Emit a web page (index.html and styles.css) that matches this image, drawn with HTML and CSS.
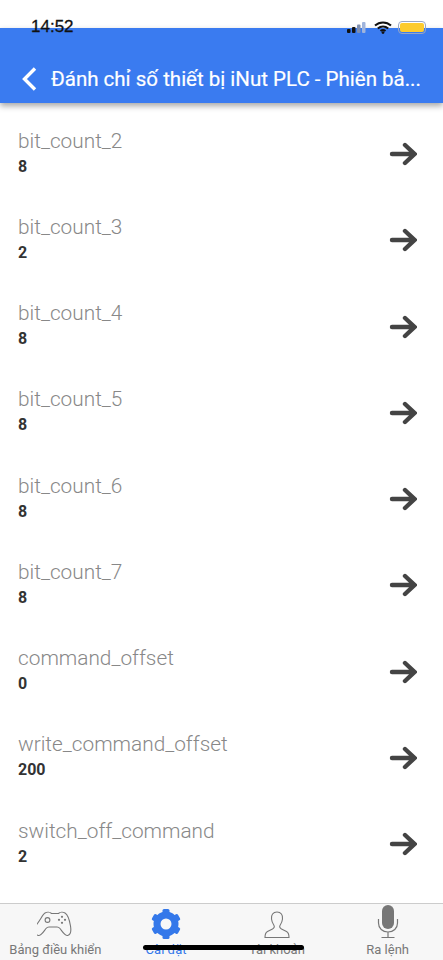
FILE: index.html
```html
<!DOCTYPE html>
<html lang="vi">
<head>
  <meta charset="UTF-8">
  <title>Đánh chỉ số thiết bị</title>
  <link rel="stylesheet" href="styles.css">
</head>
<body>
  <header class="topbar">
    <svg class="back" width="18" height="26" viewBox="0 0 18 26">
      <path d="M15 2.500 4.500 13 15 23.500" fill="none" stroke="#fff" stroke-width="3.400"/>
    </svg>
    <h1 class="title">Đánh chỉ số thiết bị iNut PLC - Phiên bả...</h1>
  </header>

  <div class="status">
    <span class="time">14:52</span>
    <div class="status-icons">
      <svg width="22" height="12" viewBox="0 0 22 12">
        <rect x="1" y="8" width="3.500" height="4" rx="1" fill="#111"/>
        <rect x="6" y="6" width="3.500" height="6" rx="1" fill="#111"/>
        <rect x="11" y="3.500" width="3.500" height="8.500" rx="1" fill="#7f8fb0"/>
        <rect x="16" y="1" width="3.500" height="11" rx="1" fill="#9fb4dc"/>
      </svg>
      <svg width="18" height="13" viewBox="0 0 18 13">
        <path d="M1 4.600C5.600.4 12.400.4 17 4.600M3.800 7.400c3-2.700 7.400-2.700 10.400 0M6.500 10c1.500-1.200 3.500-1.200 5 0" fill="none" stroke="#111" stroke-width="2"/>
        <circle cx="9" cy="11.600" r="1.400" fill="#111"/>
      </svg>
      <div class="battery"><div class="battery-fill"></div></div>
    </div>
  </div>

  <main class="list">
    <div class="row">
      <div class="row-text"><div class="name">bit_count_2</div><div class="value">8</div></div>
      <svg class="arrow" width="28" height="24" viewBox="0 0 28 24"><path d="M3 12h22M16 3l9.500 9-9.500 9"/></svg>
    </div>
    <div class="row">
      <div class="row-text"><div class="name">bit_count_3</div><div class="value">2</div></div>
      <svg class="arrow" width="28" height="24" viewBox="0 0 28 24"><path d="M3 12h22M16 3l9.500 9-9.500 9"/></svg>
    </div>
    <div class="row">
      <div class="row-text"><div class="name">bit_count_4</div><div class="value">8</div></div>
      <svg class="arrow" width="28" height="24" viewBox="0 0 28 24"><path d="M3 12h22M16 3l9.500 9-9.500 9"/></svg>
    </div>
    <div class="row">
      <div class="row-text"><div class="name">bit_count_5</div><div class="value">8</div></div>
      <svg class="arrow" width="28" height="24" viewBox="0 0 28 24"><path d="M3 12h22M16 3l9.500 9-9.500 9"/></svg>
    </div>
    <div class="row">
      <div class="row-text"><div class="name">bit_count_6</div><div class="value">8</div></div>
      <svg class="arrow" width="28" height="24" viewBox="0 0 28 24"><path d="M3 12h22M16 3l9.500 9-9.500 9"/></svg>
    </div>
    <div class="row">
      <div class="row-text"><div class="name">bit_count_7</div><div class="value">8</div></div>
      <svg class="arrow" width="28" height="24" viewBox="0 0 28 24"><path d="M3 12h22M16 3l9.500 9-9.500 9"/></svg>
    </div>
    <div class="row">
      <div class="row-text"><div class="name">command_offset</div><div class="value">0</div></div>
      <svg class="arrow" width="28" height="24" viewBox="0 0 28 24"><path d="M3 12h22M16 3l9.500 9-9.500 9"/></svg>
    </div>
    <div class="row">
      <div class="row-text"><div class="name">write_command_offset</div><div class="value">200</div></div>
      <svg class="arrow" width="28" height="24" viewBox="0 0 28 24"><path d="M3 12h22M16 3l9.500 9-9.500 9"/></svg>
    </div>
    <div class="row">
      <div class="row-text"><div class="name">switch_off_command</div><div class="value">2</div></div>
      <svg class="arrow" width="28" height="24" viewBox="0 0 28 24"><path d="M3 12h22M16 3l9.500 9-9.500 9"/></svg>
    </div>
  </main>

  <nav class="tabs">
    <div class="tab">
      <svg class="pad" width="36" height="28" viewBox="0 0 36 28" fill="none" stroke="#777" stroke-width="1.100">
        <path d="M8 3c2-1.200 5-1 6.500.5h7C23 2 26 1.800 28 3c2.500 1.500 4.500 7 5.500 13 .8 5-.2 9-2.800 9.500-2.700.5-5-3.500-7.700-7-1-1.200-1.800-1.500-3-1.500h-8c-1.200 0-2 .3-3 1.500-2.700 3.500-5 7.500-7.700 7-2.600-.5-3.600-4.500-2.800-9.500C3.500 10 5.500 4.500 8 3Z"/>
        <circle cx="10.500" cy="10" r="2.400"/>
        <g fill="#777" stroke="none"><circle cx="25" cy="6.800" r="1.100"/><circle cx="25" cy="12.800" r="1.100"/><circle cx="22" cy="9.800" r="1.100"/><circle cx="28" cy="9.800" r="1.100"/></g>
      </svg>
      <span class="tab-label">Bảng điều khiển</span>
    </div>
    <div class="tab tab-active">
      <svg width="30" height="30" viewBox="-15 -15 30 30" fill="#3478ea">
        <circle r="9" fill="none" stroke="#3478ea" stroke-width="7"/>
        <rect x="-3.500" y="-15" width="7" height="6" rx="1.500"/>
        <rect x="-3.500" y="-15" width="7" height="6" rx="1.500" transform="rotate(60)"/>
        <rect x="-3.500" y="-15" width="7" height="6" rx="1.500" transform="rotate(120)"/>
        <rect x="-3.500" y="-15" width="7" height="6" rx="1.500" transform="rotate(180)"/>
        <rect x="-3.500" y="-15" width="7" height="6" rx="1.500" transform="rotate(240)"/>
        <rect x="-3.500" y="-15" width="7" height="6" rx="1.500" transform="rotate(300)"/>
      </svg>
      <span class="tab-label">Cài đặt</span>
    </div>
    <div class="tab">
      <svg width="26" height="28" viewBox="0 0 26 28" fill="none" stroke="#777" stroke-width="1.100">
        <path d="M13 1c4 0 6 3 5.500 7-.3 3-1.500 5-2.500 6.500-.7 1.200-.3 2.500 1.500 3.500l5 2.500c1.500.8 2.500 2.500 2.500 6H1c0-3.500 1-5.200 2.500-6l5-2.500c1.800-1 2.200-2.300 1.500-3.500C9 13 7.800 11 7.500 8 7 4 9 1 13 1Z"/>
      </svg>
      <span class="tab-label">Tài khoản</span>
    </div>
    <div class="tab">
      <svg width="22" height="34" viewBox="0 0 22 34">
        <rect x="5" y="0" width="12" height="24" rx="6" fill="#777"/>
        <path d="M1.500 14v4c0 5.500 4 9 9.500 9s9.500-3.500 9.500-9v-4M11 27v5M4.500 32.500h13" fill="none" stroke="#777" stroke-width="1.200"/>
      </svg>
      <span class="tab-label">Ra lệnh</span>
    </div>
  </nav>
  <div class="home-bar"></div>
</body>
</html>
```

FILE: styles.css
```css
* { box-sizing: border-box; }
body {
  margin: 0;
  height: 960px;
  overflow: hidden;
  background: #fff;
  font-family: Roboto, "Liberation Sans", sans-serif;
  display: flex;
  flex-direction: column;
  position: relative;
  padding-top: 28px;
}
.status {
  position: absolute;
  left: 31px; right: 17px; top: 18px;
  display: flex;
  justify-content: space-between;
  align-items: center;
  height: 18px;
}
.time {
  font-family: "Liberation Sans", sans-serif;
  font-size: 17px;
  color: #111;
  -webkit-text-stroke: .3px #111;
}
.status-icons { display: flex; align-items: center; gap: 6px; }
.battery {
  width: 28px; height: 13px;
  border: 1px solid #98a6c4;
  border-radius: 4px;
  padding: 1px;
}
.battery-fill { width: 100%; height: 100%; background: #fdcb2e; border-radius: 2px; }

.topbar {
  height: 75px;
  flex: none;
  background: #3a7bf0;
  box-shadow: 0 3px 6px rgba(0, 0, 0, .35);
  display: flex;
  align-items: flex-end;
  padding: 0 0 11px 20px;
  gap: 13px;
}
.back { flex: none; }
.title {
  margin: 0;
  color: #fff;
  font-size: 20.500px;
  font-weight: 400;
  line-height: 26px;
  white-space: nowrap;
  -webkit-text-stroke: .2px #fff;
}

.list { flex: 1; padding-top: 7px; }
.row {
  height: 86.250px;
  display: flex;
  align-items: center;
  justify-content: space-between;
  padding: 0 26px 0 18px;
}
.name { font-size: 20.800px; font-weight: 300; color: #888; line-height: 24px; }
.value { font-size: 16px; font-weight: 700; color: #333; line-height: 22px; margin-top: 3px; }
.arrow {
  fill: none;
  stroke: #444;
  stroke-width: 4.400;
  stroke-linecap: round;
  stroke-linejoin: miter;
  margin-top: 2px;
}

.tabs {
  height: 57px;
  flex: none;
  background: #f7f7f7;
  border-top: 1px solid #ccc;
  display: flex;
}
.tab {
  flex: 1;
  display: flex;
  flex-direction: column;
  align-items: center;
  justify-content: flex-end;
  padding-bottom: 3px;
  gap: 4px;
}
.tab svg { display: block; }
.tab .pad { margin-bottom: 1px; }
.tab-label { font-size: 13px; color: #777; line-height: 14px; white-space: nowrap; }
.tab-active .tab-label { color: #3478ea; }
.home-bar {
  position: absolute;
  left: 143px; top: 945px;
  width: 161px; height: 5px;
  background: #000;
  border-radius: 3px;
}
```
